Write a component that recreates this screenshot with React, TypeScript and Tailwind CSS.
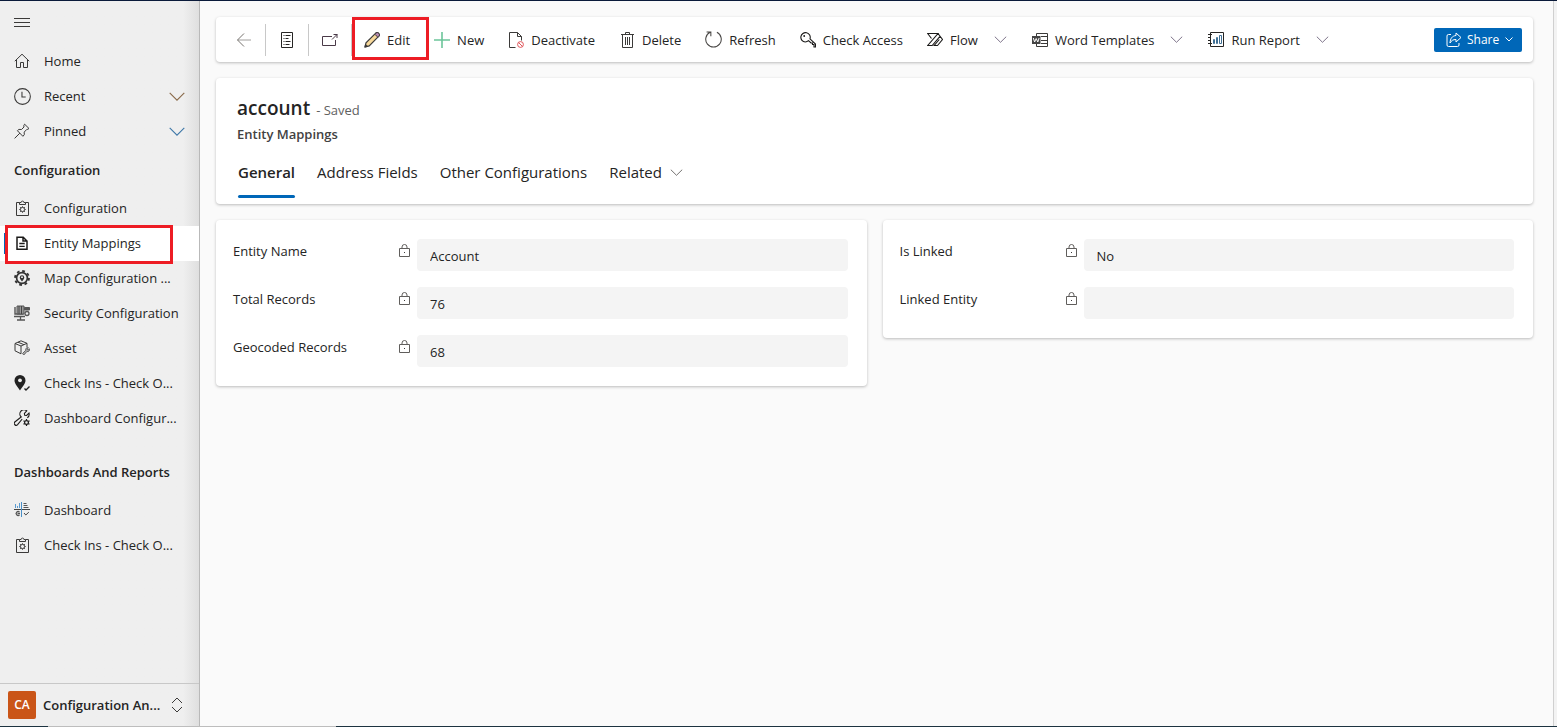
import { useState, type ReactNode } from "react";

type IconProps = { children: ReactNode; className?: string; stroke?: string };

function Icon({ children, className = "size-4", stroke = "#3b3a39" }: IconProps) {
  return (
    <svg
      viewBox="0 0 16 16"
      className={`shrink-0 ${className}`}
      fill="none"
      stroke={stroke}
      strokeWidth="1"
      aria-hidden="true"
    >
      {children}
    </svg>
  );
}

function ChevronDown({ className = "w-[13px] h-[7px]", stroke = "#605e5c" }: { className?: string; stroke?: string }) {
  return (
    <svg viewBox="0 0 14 8" className={`shrink-0 ${className}`} fill="none" stroke={stroke} aria-hidden="true">
      <path d="M.5 .8 7 7.2 13.5 .8" />
    </svg>
  );
}

const ClipboardIcon = () => (
  <Icon>
    <path d="M5.5 2.5h-3v13h12v-13h-3" />
    <path d="M5.5 4.5v-2h1.6a1.4 1.4 0 0 1 2.800 0h1.600v2z" />
    <circle cx="8.5" cy="9.5" r="2.1" />
    <path d="M8.5 6.3v1M8.5 11.7v1M5.3 9.5h1M10.7 9.5h1M6.200 7.200l.8.8M10 11l.8.8M10.800 7.200l-.8.8M7 11l-.8.8" />
  </Icon>
);

const icons = {
  home: (
    <Icon>
      <path d="M.8 8.2 8 1.2l7.200 7M2.500 6.800v7.700h4v-5h3v5h4V6.800" />
    </Icon>
  ),
  recent: (
    <Icon className="size-[17px]">
      <circle cx="8" cy="8" r="7.4" />
      <path d="M7.5 3.5v5h3.5" />
    </Icon>
  ),
  pinned: (
    <Icon>
      <path d="m10.6 1.2 4.4 4.3-1.2.8-1 .1-2.6 2.7.1 2.6-1.4 1.6-5.5-5.6 1.5-1.3 2.6.1L10 4l-.2-1.5zM5.9 10.1.6 15.4" />
    </Icon>
  ),
  clipboard: <ClipboardIcon />,
  document: (
    <Icon stroke="#1b1a19">
      <path strokeWidth="1.5" d="M3 2.2h6.2L13 6v8.2H3zM9 2.2V6h4" />
      <path strokeWidth="1.3" d="M5.3 8.5h5.4M5.3 11.3h5.4" />
    </Icon>
  ),
  mapGear: (
    <Icon stroke="#333">
      <circle cx="8" cy="8" r="7" strokeWidth="1.800" strokeDasharray="2.750 2.750" />
      <circle cx="8" cy="8" r="5.400" strokeWidth="1.700" />
      <path d="M8 11.500c-1.500-1.800-2.200-2.900-2.200-4.100a2.200 2.200 0 0 1 4.400 0c0 1.200-.7 2.300-2.200 4.100z" fill="#333" stroke="none" />
      <circle cx="8" cy="7.200" r=".9" fill="#fff" stroke="none" />
    </Icon>
  ),
  security: (
    <Icon stroke="#555">
      <path d="M1 2v7h8.500" strokeWidth="1.400" />
      <path d="M3 1h7v8H3z" fill="#999" />
      <path d="M5 1v8M7.500 1v8" stroke="#444" />
      <path d="M10.500 2.500h5V5h-5z" fill="#555" />
      <path d="M0 11.500h11M6.500 11v4M3 15h8" strokeWidth="1.300" />
      <circle cx="13" cy="8.500" r="2" strokeWidth="1.300" />
    </Icon>
  ),
  asset: (
    <Icon>
      <path d="m1 3.500 6-2.700 6 2.500v4M1 3.500 7 6l6-2.700M1 3.500v7.300l6 3V6M4 2.200l6 2.500" />
      <path d="m8.500 13.500 3.300-3.300a2 2 0 0 1 2.600-2.500l-1.200 1.400.9.900 1.300-1.200a2 2 0 0 1-2.500 2.700L9.800 15z" fill="#aaa" stroke="#666" />
    </Icon>
  ),
  checkIn: (
    <Icon stroke="#222">
      <path d="M6 0a5.500 5.500 0 0 0-5.500 5.500C.5 9 4 12 6 15.500 8 12 11.500 9 11.500 5.500A5.500 5.500 0 0 0 6 0z" fill="#222" stroke="none" />
      <circle cx="6" cy="5.300" r="1.900" fill="#f0f0f0" stroke="none" />
      <path d="m10.500 13.500 1.500 1.500 3.500-3.500" strokeWidth="1.400" />
    </Icon>
  ),
  wrenchGear: (
    <Icon stroke="#1b1a19">
      <path strokeWidth="1.100" d="M8.200 9 3.600 14.700a1.900 1.900 0 0 1-2.800-2.700l6.400-5A4 4 0 0 1 12.800.9l-2.400 2.600.3 1.700 1.900.3 2.400-2.400c.5 2-.2 3.800-1.700 4.700" />
      <circle cx="12.500" cy="12.500" r="1.900" strokeWidth="1.200" />
      <path strokeWidth="1.200" d="M12.500 9v1.500M12.500 14.500V16M9.500 10.800l1.200.7M14.300 13.500l1.200.7M15.500 10.800l-1.200.7M10.700 13.500l-1.200.7" />
    </Icon>
  ),
  dashboard: (
    <Icon stroke="#555">
      <path d="M0 7.500h16" stroke="#444" />
      <path d="M7.500 0v15" stroke="#4a90c8" />
      <path d="M1.500 6V2M3.500 6V4M5.500 6V1" stroke="#5b9bd0" />
      <path d="M9.500 1.500h3M9.500 3.500h4M9.500 5.500h5" />
      <path d="M5.500 10a2 2 0 1 0 0 3M3.500 11.500h2.500" strokeWidth="1.300" />
      <path d="m10 11 1.800 2 3-2.800" stroke="#444" />
    </Icon>
  ),
};

type NavItemProps = {
  icon: ReactNode;
  label: string;
  chevron?: string;
  selected?: boolean;
  onSelect?: () => void;
};

function NavItem({ icon, label, chevron, selected, onSelect }: NavItemProps) {
  return (
    <li className={`relative h-[35px] ${selected ? "bg-white" : ""}`}>
      {selected && <span className="absolute left-1 top-[7px] h-[21px] w-[3px] bg-[#0067b8]" />}
      <a
        href="#"
        onClick={(e) => {
          e.preventDefault();
          onSelect?.();
        }}
        className="flex h-full items-center px-3.5"
      >
        <span className="flex w-[30px] shrink-0 items-center pb-px">{icon}</span>
        <span className="flex-1 truncate pt-px">{label}</span>
        {chevron && <ChevronDown className="h-[9px] w-4" stroke={chevron} />}
      </a>
      {label === "Entity Mappings" && (
        <span className="pointer-events-none absolute -top-px left-[5px] h-[39px] w-[168px] border-3 border-[#ed1c24]" />
      )}
    </li>
  );
}

const configItems = [
  { label: "Configuration", icon: icons.clipboard },
  { label: "Entity Mappings", icon: icons.document },
  { label: "Map Configuration ...", icon: icons.mapGear },
  { label: "Security Configuration", icon: icons.security },
  { label: "Asset", icon: icons.asset },
  { label: "Check Ins - Check O...", icon: icons.checkIn },
  { label: "Dashboard Configur...", icon: icons.wrenchGear },
];

function Sidebar() {
  const [selected, setSelected] = useState("Entity Mappings");

  return (
    <aside className="flex w-[200px] shrink-0 flex-col border-r border-[#b9b9b9] bg-linear-to-r from-[#efefef] from-92% to-[#dfdfdf]">
      <div className="flex h-[43px] items-center pl-3.5">
        <button type="button" aria-label="Toggle navigation">
          <Icon>
            <path d="M0 3.500h16M0 7.500h16M0 11.500h16" />
          </Icon>
        </button>
      </div>
      <nav>
        <ul>
          <NavItem icon={icons.home} label="Home" />
          <NavItem icon={icons.recent} label="Recent" chevron="#8a6a4a" />
          <NavItem icon={icons.pinned} label="Pinned" chevron="#3f78a8" />
        </ul>
        <h2 className="flex h-[42px] items-center pl-3.5 pt-0.5 font-semibold">Configuration</h2>
        <ul>
          {configItems.map((item) => (
            <NavItem
              key={item.label}
              icon={item.icon}
              label={item.label}
              selected={selected === item.label}
              onSelect={() => setSelected(item.label)}
            />
          ))}
        </ul>
        <h2 className="mt-[15px] flex h-[42px] items-center pl-3.5 pt-0.5 font-semibold">Dashboards And Reports</h2>
        <ul>
          <NavItem icon={icons.dashboard} label="Dashboard" />
          <NavItem icon={icons.clipboard} label="Check Ins - Check O..." />
        </ul>
      </nav>
      <button
        type="button"
        className="mt-auto flex h-[43px] items-center border-t border-[#c8c8c8] pl-2 pr-4 text-left font-semibold"
      >
        <span className="flex size-7 items-center justify-center rounded-xs bg-[#ca5518] text-xs text-white">CA</span>
        <span className="ml-[7px] flex-1 truncate pt-0.5">Configuration An...</span>
        <svg viewBox="0 0 12 16" className="h-4 w-3 shrink-0" fill="none" stroke="#3b3a39" aria-hidden="true">
          <path d="M1 6l5-5 5 5M1 10l5 5 5-5" />
        </svg>
      </button>
    </aside>
  );
}

function ToolButton({ icon, label, menu, marked }: { icon: ReactNode; label: string; menu?: boolean; marked?: boolean }) {
  return (
    <button type="button" className="relative flex h-full items-center whitespace-nowrap px-3">
      {icon}
      <span className="ml-[7px] pt-[3px]">{label}</span>
      {menu && <ChevronDown className="ml-4 mr-px h-[7px] w-[13px]" stroke="#6a5f78" />}
      {marked && (
        <span className="pointer-events-none absolute left-0 top-0 h-[43px] w-[77px] border-3 border-[#ed1c24]" />
      )}
    </button>
  );
}

function Toolbar() {
  return (
    <header className="flex h-[45px] items-center rounded-sm bg-white pl-[7px] pr-[11px] shadow-[0_1px_3px_rgba(0,0,0,0.25)]">
      <button type="button" aria-label="Back" className="flex h-8 w-[43px] items-center justify-center border-r border-[#c8c8c8]">
        <Icon stroke="#a09e9c">
          <path d="M15 8H1.500" />
          <path d="M8 1.500 1.500 8 8 14.500" stroke="#77736f" />
        </Icon>
      </button>
      <button type="button" aria-label="Form list" className="flex h-8 w-[43px] items-center justify-center border-r border-[#c8c8c8]">
        <Icon stroke="#252423">
          <path d="M2.500.5h11v15h-11z" />
          <path d="M6.500 3.500h5M6.500 6.500h3M6.500 9.500h5M6.500 12.500h4M4.500 3.500h1M4.500 6.500h1M4.500 9.500h1M4.500 12.500h1" />
        </Icon>
      </button>
      <button type="button" aria-label="Open in new window" className="flex h-8 w-[43px] items-center justify-center border-r border-[#c8c8c8]">
        <Icon stroke="#4a3a48">
          <path d="M10 4.500H.5v9h13V8" />
          <path d="m10 7.500 5.500-5.500M11.500 2.500h3.500V6" />
        </Icon>
      </button>
      <ToolButton
        label="Edit"
        marked
        icon={
          <Icon stroke="#3b3a39">
            <path d="m1 15 1-4.200L11.500 1.300a1.900 1.900 0 0 1 3.100 3.100L5.200 13.900z" fill="#f8d99a" strokeWidth="1.200" />
            <path d="m10.800 2.200.9-.9a1.900 1.900 0 0 1 3.100 3.100l-.9.900z" fill="#b98bb4" />
            <path d="m1 15 .6-2.600 2 2z" fill="#3b3a39" />
          </Icon>
        }
      />
      <ToolButton
        label="New"
        icon={
          <Icon stroke="#6cc59a">
            <path d="M8 0v16M0 8h16" strokeWidth="1.600" />
          </Icon>
        }
      />
      <ToolButton
        label="Deactivate"
        icon={
          <Icon>
            <path d="M7.500 15.500h-6V.5h8l4 4v4M9.500.5v4h4" />
            <circle cx="12.500" cy="12.500" r="2.900" stroke="#e0555a" />
            <path d="m10.500 10.500 4 4" stroke="#e0555a" />
          </Icon>
        }
      />
      <ToolButton
        label="Delete"
        icon={
          <Icon>
            <path d="M2 2.500h13M6.500 2.500v-2h4v2M3.500 2.500v13h10v-13M6.500 5v8M8.500 5v8M10.500 5v8" />
          </Icon>
        }
      />
      <ToolButton
        label="Refresh"
        icon={
          <Icon className="size-[17px]" stroke="#484644">
            <path d="M4.800 1.200a7.300 7.300 0 1 0 6.400 0M1.500 1h4v4" />
          </Icon>
        }
      />
      <ToolButton
        label="Check Access"
        icon={
          <Icon stroke="#1b1a19">
            <path d="M8.500 8.700 11 11h1.500v1.500H14V15h1.500v-3L10 6.800A4.700 4.700 0 1 0 5.300 10c1.200 0 2.300-.5 3.200-1.300z" strokeWidth="1.100" />
            <circle cx="4.200" cy="4" r=".9" fill="#1b1a19" stroke="none" />
          </Icon>
        }
      />
      <ToolButton
        label="Flow"
        menu
        icon={
          <Icon stroke="#1b1a19">
            <path strokeWidth="1.100" d="M4.500 6.500.7 1.500H11L.7 13.500h4.500L13.200 4.200M11 1.500 15.500 7.500l-5 6H7.200L12.300 7.500" />
          </Icon>
        }
      />
      <ToolButton
        label="Word Templates"
        menu
        icon={
          <Icon>
            <path d="M4.500 4V1.500h11v13h-11V12M9 4.500h6.500M9 8.500h6.500M9 11.500h6.500" />
            <path d="M0 4h8.500v8H0z" fill="#444" stroke="none" />
            <path d="m1.300 6 1.300 4L4.200 6.500 5.800 10l1.300-4" stroke="#fff" />
          </Icon>
        }
      />
      <ToolButton
        label="Run Report"
        menu
        icon={
          <Icon stroke="#252423">
            <path d="M2.500 .5h13v14h-13zM0 2.500h4M0 5.500h3M0 8.500h3M0 11.500h4" />
            <path d="M5.500 7.500h1v4h-1zM8.500 5.500h1v6h-1zM11.500 3.500h2v8h-2z" stroke="#3f6f94" />
          </Icon>
        }
      />
      <button
        type="button"
        className="ml-auto flex h-6 w-[88px] items-center rounded-xs bg-[#0067b8] pl-3 text-xs font-medium text-white"
      >
        <Icon stroke="#fff">
          <path d="M5 2.500H2.500a1.500 1.500 0 0 0-1.500 1.500v9a1.500 1.500 0 0 0 1.500 1.500h9a1.500 1.500 0 0 0 1.500-1.500V11" />
          <path d="M10 1v2.500C6 4 4.300 6.500 4 11c1.500-2.500 3-3.500 6-3.500V10l5-4.500z" />
        </Icon>
        <span className="ml-[5px] pt-px">Share</span>
        <svg viewBox="0 0 8 5" className="ml-1.5 h-[5px] w-2" fill="none" stroke="#fff" aria-hidden="true">
          <path d="m.5.500 3.500 3.500L7.500.5" />
        </svg>
      </button>
    </header>
  );
}

const tabs = ["General", "Address Fields", "Other Configurations", "Related"];

function RecordHeader() {
  const [active, setActive] = useState("General");

  return (
    <section className="rounded-sm bg-white px-[21px] pt-4 pb-1.5 shadow-[0_1px_3px_rgba(0,0,0,0.25)]">
      <div className="flex items-baseline">
        <h1 className="text-[19px] leading-7 font-semibold">account</h1>
        <span className="ml-1.5 text-[#616161]">- Saved</span>
      </div>
      <p className="leading-6 font-semibold text-[#424242]">Entity Mappings</p>
      <div role="tablist" className="mt-2 flex gap-[22px] pl-px text-[15px]">
        {tabs.map((tab) => (
          <button
            key={tab}
            type="button"
            role="tab"
            aria-selected={active === tab}
            onClick={() => setActive(tab)}
            className="flex flex-col gap-[5px]"
          >
            <span className={`flex h-9 items-center whitespace-nowrap ${active === tab ? "font-semibold" : ""}`}>
              {tab}
              {tab === "Related" && <ChevronDown className="ml-2 h-[7px] w-[13px]" />}
            </span>
            <span className={`h-[3px] w-full rounded-full ${active === tab ? "bg-[#0067b8]" : ""}`} />
          </button>
        ))}
      </div>
    </section>
  );
}

function Field({ id, label, value }: { id: string; label: string; value: string }) {
  return (
    <div className="flex">
      <div className="flex h-6 w-[184px] shrink-0 items-center justify-between pr-[7px]">
        <label htmlFor={id} className="pt-0.5">
          {label}
        </label>
        <svg viewBox="0 0 11 13" className="mb-px h-[13px] w-[11px]" fill="none" stroke="#605e5c" aria-hidden="true">
          <path d="M.5 4.500h10v8H.5zM3 4.500V3a2.500 2.500 0 0 1 5 0v1.500" />
          <path d="M5 8h1v1H5z" fill="#3b3a39" stroke="none" />
        </svg>
      </div>
      <input
        id={id}
        readOnly
        value={value}
        className="h-8 min-w-0 flex-1 rounded-sm bg-[#f4f4f4] px-[13px] pt-0.5 outline-none"
      />
    </div>
  );
}

function FieldCard({ children }: { children: ReactNode }) {
  return (
    <section className="flex flex-1 flex-col gap-4 rounded-sm bg-white py-[19px] pl-[17px] pr-[19px] shadow-[0_1px_3px_rgba(0,0,0,0.25)]">
      {children}
    </section>
  );
}

export default function App() {
  return (
    <div className="flex min-h-screen flex-col bg-[#fafafa] font-['Open_Sans','Noto_Sans',sans-serif] text-[13px] text-[#242424]">
      <div className="h-px bg-[#0a1a3a]" />
      <div className="flex flex-1">
        <Sidebar />
        <main className="flex min-w-0 flex-1 flex-col gap-4 pl-4 pr-5 pt-4">
          <Toolbar />
          <RecordHeader />
          <div className="flex items-start gap-4">
            <FieldCard>
              <Field id="entity-name" label="Entity Name" value="Account" />
              <Field id="total-records" label="Total Records" value="76" />
              <Field id="geocoded-records" label="Geocoded Records" value="68" />
            </FieldCard>
            <FieldCard>
              <Field id="is-linked" label="Is Linked" value="No" />
              <Field id="linked-entity" label="Linked Entity" value="" />
            </FieldCard>
          </div>
        </main>
        <div className="w-1 border-l border-[#d0d0d0] bg-[#f3f3f3]" />
      </div>
      <div className="flex h-px">
        <div className="w-12 bg-[#1d3340]" />
        <div className="w-72 bg-[#bdbdbd]" />
        <div className="flex-1 bg-[#1d3340]" />
      </div>
    </div>
  );
}
